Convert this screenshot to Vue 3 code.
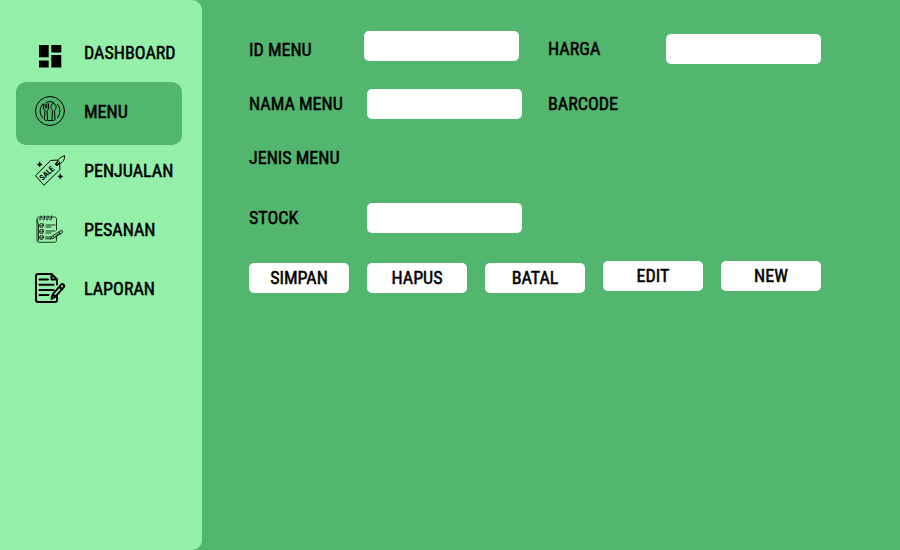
<script setup>
import { ref, reactive } from 'vue'

const items = [
  { id: 'dashboard', label: 'DASHBOARD' },
  { id: 'menu', label: 'MENU' },
  { id: 'penjualan', label: 'PENJUALAN' },
  { id: 'pesanan', label: 'PESANAN' },
  { id: 'laporan', label: 'LAPORAN' },
]
const active = ref('menu')
const form = reactive({ id: '', nama: '', stock: '', harga: '' })

function clearForm() {
  Object.keys(form).forEach((key) => (form[key] = ''))
}
</script>

<template>
  <div class="app">
    <aside class="sidebar">
      <nav class="nav">
        <a
          v-for="item in items"
          :key="item.id"
          :href="'#' + item.id"
          class="nav-item"
          :class="{ active: active === item.id }"
          @click.prevent="active = item.id"
        >
          <svg v-if="item.id === 'dashboard'" class="icon" viewBox="0 0 30 30" aria-hidden="true">
            <path d="M4 7h9.700v12.300H4zM16.300 7h10v7.500h-10zM4 22.500h9.700v7H4zM16.300 17h10v12.500h-10z" fill="#000" />
          </svg>
          <svg v-else-if="item.id === 'menu'" class="icon thin" viewBox="0 0 30 30" aria-hidden="true">
            <circle cx="15" cy="14" r="14.500" />
            <path d="M11.500 5.200a10 10 0 0 1 7 0M7.500 7.300a10 10 0 0 0 0 13.400M22.500 7.300a10 10 0 0 1 0 13.400M12.800 23.500h4.400" />
            <path d="M8.500 7v4c0 1.500 1 2 1.500 2.500l-.5 8.500c0 2 3 2 3 0L12 13.500c.8-.5 1.500-1 1.500-2.500V7M10.200 7v4M11.800 7v4" />
            <path d="M18.500 6.500c-3 0-3.500 5-1 7l-.5 8.500c0 2 3 2 3 0l-.5-8.500c2.500-2 2-7-1-7z" />
          </svg>
          <svg v-else-if="item.id === 'penjualan'" class="icon thin" viewBox="0 0 30 30" aria-hidden="true">
            <path d="M.8 19.500 15.500 4.500l7-.5 2 2 .5 7.500L9.300 29z" />
            <circle cx="22" cy="8" r="1.500" />
            <path d="M21.500 8.500c0-4 3-7 8-8.800 .5 4-2 7.800-7 8.800" />
            <path d="M4.700 6l.8 1.700 1.700.8-1.700.8-.8 1.700-.8-1.700-1.700-.8 1.700-.8zM25.300 18l.8 1.700 1.700.8-1.700.8-.8 1.700-.8-1.700-1.700-.8 1.700-.8z" fill="#000" stroke-width="0.500" />
            <text x="7.500" y="25" transform="rotate(-43 7.500 25)" class="sale">SALE</text>
          </svg>
          <svg v-else-if="item.id === 'pesanan'" class="icon thin soft" viewBox="0 0 30 30" aria-hidden="true">
            <path d="M21.500 15V4c0-1.200-.8-2-2-2H4C2.800 2 2 2.800 2 4v21.500c0 1 .8 1.800 2 1.800h15.500c1.200 0 2-.8 2-2V22" />
            <path d="M2 5l1.500 5v15.500" />
            <path d="M6 .8v3.500q-2 2-1.500-.5M9.500.8v3.500q-2 2-1.500-.5M13 .8v3.500q-2 2-1.500-.5M16.500.8v3.500q-2 2-1.500-.5" />
            <circle cx="6.500" cy="10.500" r="2" />
            <circle cx="6.500" cy="16.500" r="2" />
            <circle cx="6.500" cy="22.500" r="2" />
            <path d="M5.500 10.300l1 1 2-2.500M5.500 16.300l1 1 2-2.500M5.500 22.300l1 1 2-2.500M11 10h9M11 16h9M11 12h5M11 18h5M10.500 22h6M10.500 23.800h5" />
            <path d="M15.500 23.800l2-3L26 15.500q2-.3 1.500 1.800L19 23zM18 20.500l1.500 2.500M24 17l1.300 2.300M20.500 21l4-2.700" />
          </svg>
          <svg v-else class="icon bold" viewBox="0 0 30 30" aria-hidden="true">
            <path d="M22 10.500V5.500L16.500 0H3Q1 0 1 2v24q0 2 2 2h17q2 0 2-2v-4.500" />
            <path d="M16.500 0v5.500H22M4.500 5.500h8.500M4.500 10.800h14M4.500 16h14M4.500 21h9" />
            <path d="M16.500 24.800l1.300-4.600L26 10.800q1.200-1.300 2.500-.2t.3 2.500l-8.300 9.500zM24.300 12.800l2.800 2.500M17.800 20.200l2.700 2.400" />
          </svg>
          <span>{{ item.label }}</span>
        </a>
      </nav>
    </aside>

    <main class="content">
      <form @submit.prevent>
        <div class="columns">
          <div class="column left">
            <div class="field code">
              <label for="id-menu">ID MENU</label>
              <input id="id-menu" v-model="form.id" type="text" />
            </div>
            <div class="field">
              <label for="nama-menu">NAMA MENU</label>
              <input id="nama-menu" v-model="form.nama" type="text" />
            </div>
            <div class="field">
              <span class="caption">JENIS MENU</span>
            </div>
          </div>
          <div class="column right">
            <div class="field">
              <label for="harga">HARGA</label>
              <input id="harga" v-model="form.harga" type="text" />
            </div>
            <div class="field tall">
              <span class="caption">BARCODE</span>
            </div>
          </div>
        </div>

        <div class="field stock">
          <label for="stock">STOCK</label>
          <input id="stock" v-model="form.stock" type="text" />
        </div>

        <div class="toolbar">
          <div class="group entry">
            <button type="submit">SIMPAN</button>
            <button type="button">HAPUS</button>
            <button type="button" @click="clearForm">BATAL</button>
          </div>
          <div class="group">
            <button type="button">EDIT</button>
            <button type="button" @click="clearForm">NEW</button>
          </div>
        </div>
      </form>
    </main>
  </div>
</template>

<style>
body {
  margin: 0;
  background: #52b66e;
}
</style>

<style scoped>
.app {
  display: flex;
  min-height: 100vh;
  background: #52b66e;
  color: #000;
  font-family: "Roboto Condensed", "Liberation Sans Narrow", "Liberation Sans", sans-serif;
  font-size: 18px;
  line-height: 22px;
  -webkit-text-stroke: 0.5px #000;
}

.sidebar {
  box-sizing: border-box;
  flex: 0 0 202px;
  padding: 23px 20px 23px 16px;
  background: #94f0a9;
  border-radius: 0 10px 10px 0;
}

.nav {
  display: flex;
  flex-direction: column;
}

.nav-item {
  position: relative;
  z-index: 0;
  display: flex;
  align-items: center;
  gap: 19px;
  height: 59px;
  padding-left: 19px;
  color: inherit;
  text-decoration: none;
  white-space: nowrap;
}

.nav-item.active::before {
  content: "";
  position: absolute;
  inset: 0 0 -4px;
  z-index: -1;
  border-radius: 10px;
  background: #52b66e;
}

.icon {
  flex: none;
  width: 30px;
  height: 30px;
  overflow: visible;
  fill: none;
  stroke-linecap: round;
  stroke-linejoin: round;
}

.thin {
  stroke: #000;
  stroke-width: 1;
}

.soft {
  stroke-width: 0.8;
}

.bold {
  stroke: #000;
  stroke-width: 2;
}

.sale {
  fill: #000;
  stroke: none;
  -webkit-text-stroke: 0;
  font: bold 8px "Roboto Condensed", "Liberation Sans", sans-serif;
}

.content {
  flex: 1;
  padding: 31px 47px;
}

.columns {
  display: flex;
  gap: 26px;
}

.column {
  display: flex;
  flex-direction: column;
}

.left {
  gap: 28px;
}

.right {
  gap: 25px;
  padding-top: 3px;
}

.field {
  display: flex;
  align-items: center;
}

.field label {
  flex: 0 0 118px;
  white-space: nowrap;
}

.field.code {
  align-items: flex-end;
}

.field.code label {
  flex-basis: 115px;
}

.tall {
  min-height: 30px;
}

.stock {
  margin-top: 34px;
}

input {
  box-sizing: border-box;
  width: 155px;
  height: 30px;
  padding: 0 8px;
  border: 0;
  border-radius: 5px;
  background: #fff;
  font: inherit;
}

.toolbar {
  display: flex;
  flex-wrap: wrap;
  gap: 18px;
  margin-top: 28px;
}

.group {
  display: flex;
  gap: 18px;
}

.entry {
  padding-top: 2px;
}

button {
  width: 100px;
  height: 30px;
  padding: 0;
  border: 0;
  border-radius: 5px;
  background: #fff;
  color: inherit;
  font: inherit;
  -webkit-text-stroke: inherit;
  cursor: pointer;
}
</style>
